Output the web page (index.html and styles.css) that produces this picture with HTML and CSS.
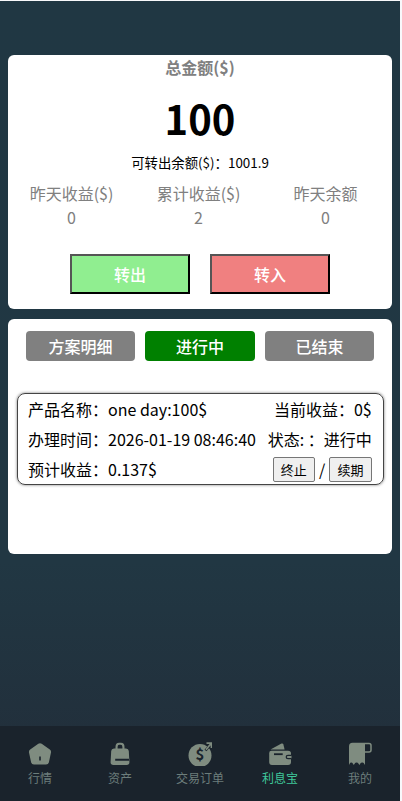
FILE: index.html
```html
<!DOCTYPE html>
<html lang="zh">
<head>
    <meta charset="UTF-8">
    <meta name="viewport" content="width=device-width, initial-scale=1.0">
    <title>利息宝</title>
    <link rel="stylesheet" href="styles.css">
</head>
<body>
    <div class="app">
        <div class="page">
            <div class="card summary">
                <div class="total-title">总金额($)</div>
                <div class="total-amount">100</div>
                <div class="available">可转出余额($)：1001.9</div>
                <div class="stats">
                    <div class="stat">
                        <div>昨天收益($)</div>
                        <div class="stat-number">0</div>
                    </div>
                    <div class="stat">
                        <div>累计收益($)</div>
                        <div class="stat-number">2</div>
                    </div>
                    <div class="stat">
                        <div>昨天余额</div>
                        <div class="stat-number">0</div>
                    </div>
                </div>
                <div class="transfer-btns">
                    <button class="transfer-btn out">转出</button>
                    <button class="transfer-btn in">转入</button>
                </div>
            </div>

            <div class="card plans">
                <div class="tabs">
                    <div class="tab">方案明细</div>
                    <div class="tab active">进行中</div>
                    <div class="tab">已结束</div>
                </div>
                <div class="order">
                    <div class="order-row">
                        <span>产品名称：one day:100$</span>
                        <span>当前收益：0$</span>
                    </div>
                    <div class="order-row">
                        <span>办理时间：2026-01-19 08:46:40</span>
                        <span>状态: ：进行中</span>
                    </div>
                    <div class="order-row">
                        <span>预计收益：0.137$</span>
                        <span class="order-actions">
                            <button class="order-btn">终止</button>
                            <span>/</span>
                            <button class="order-btn">续期</button>
                        </span>
                    </div>
                </div>
            </div>
        </div>

        <div class="tabbar">
            <div class="tabbar-item">
                <svg class="tabbar-icon" viewBox="0 0 24 24"><path fill-rule="evenodd" d="M10.3 1.8 Q12 0.6 13.7 1.8 L21.8 7.6 Q23.4 8.8 23 10.6 L20.9 20.2 Q20.4 22.6 18 22.6 H6 Q3.6 22.6 3.1 20.2 L1 10.6 Q0.6 8.8 2.2 7.6 Z M11.2 14.5 V18.5 H12.8 V14.5 Z"/></svg>
                <span>行情</span>
            </div>
            <div class="tabbar-item">
                <svg class="tabbar-icon" viewBox="0 0 24 24"><path fill-rule="evenodd" d="M7.5 6.5 V5 Q7.5 0.8 11 0.8 H13 Q16.5 0.8 16.5 5 V6.5 H18 Q20.6 6.5 20.8 9 L21.4 20 Q21.6 23 18.6 23 H5.4 Q2.4 23 2.6 20 L3.2 9 Q3.4 6.5 6 6.5 Z M9.6 6.5 H14.4 V5 Q14.4 2.8 12.8 2.8 H11.2 Q9.6 2.8 9.6 5 Z M7.2 16.8 V18.8 H21.6 V16.8 Z"/></svg>
                <span>资产</span>
            </div>
            <div class="tabbar-item">
                <svg class="tabbar-icon" viewBox="0 0 24 24"><circle cx="12" cy="13.5" r="11.5"/><path class="icon-cut" d="M17.5 8.5 L23 2"/><path class="icon-arrow" d="M18.5 1.1 H23.4 V6 M18 7.8 L23.2 1.3"/><text class="icon-dollar" x="12" y="17.5" text-anchor="middle">$</text></svg>
                <span>交易订单</span>
            </div>
            <div class="tabbar-item active-item">
                <svg class="tabbar-icon" viewBox="0 0 24 24"><path d="M2.5 7.5 L13.5 1.5 Q15 1 15.4 2.5 L16.6 7.5 Z"/><path d="M1.2 11 Q1.2 8.7 3.5 8.7 H20 Q23 8.7 23 11.5 V20 Q23 23 20 23 H4 Q1.2 23 1.2 20 Z"/><rect class="icon-cut-fill" x="6" y="11.3" width="8.7" height="1.8"/><path class="icon-notch" d="M23.5 13.4 H20 Q18.2 13.4 18.2 15 Q18.2 16.6 20 16.6 H23.5"/></svg>
                <span>利息宝</span>
            </div>
            <div class="tabbar-item">
                <svg class="tabbar-icon" viewBox="0 0 24 24"><path d="M4.5 0.8 H17 V23 Q15.8 20.6 14.2 20.6 Q12.6 20.6 11.4 23 Q10 20.6 8.6 20.6 Q7 20.6 5.8 23 Q4.4 20.6 3.2 20.6 Q2 20.6 1 23 V4.5 Q1 0.8 4.5 0.8 Z"/><path class="icon-ring" d="M17 1.5 H21 Q23 1.5 23 3.5 V8 Q23 10 21 10 H17"/></svg>
                <span>我的</span>
            </div>
        </div>
    </div>
</body>
</html>
```

FILE: styles.css
```css
*, *:before, *:after {
    margin: 0;
    padding: 0;
    box-sizing: border-box;
}

html, body {
    height: 100%;
}

body {
    font-family: "Noto Sans CJK SC", "Noto Sans", sans-serif;
    background-color: #f8f8fb;
    padding: 1px 2px 0 0;
    overflow: hidden;
}

.app {
    height: 100%;
    display: flex;
    flex-direction: column;
    background: linear-gradient(#203743, #213743 70%, #222d39);
}

.page {
    flex: 1;
    padding: 54px 8px 0;
}

.card {
    background-color: #fff;
    border-radius: 6px;
}

/* Summary card */
.summary {
    height: 254px;
    text-align: center;
}

.total-title {
    font-size: 16px;
    font-weight: bold;
    line-height: 25px;
    color: #808080;
}

.total-amount {
    margin-top: 10px;
    font-size: 40px;
    font-weight: bold;
    line-height: 56px;
    color: #000;
}

.available {
    margin-top: 6px;
    font-size: 13.4px;
    line-height: 20px;
    color: #000;
}

.stats {
    display: flex;
    margin-top: 9px;
    padding-right: 3px;
}

.stat {
    flex: 1;
    font-size: 16px;
    line-height: 24px;
    color: #808080;
}

.transfer-btns {
    display: flex;
    justify-content: center;
    gap: 20px;
    margin-top: 25px;
}

.transfer-btn {
    width: 120px;
    height: 40px;
    font-family: inherit;
    font-size: 16px;
    font-weight: 500;
    color: #fff;
    border: 2px solid;
    border-color: #555 #000 #000 #555;
}

.transfer-btn.out {
    background-color: #90ee90;
}

.transfer-btn.in {
    background-color: #f08080;
}

/* Plans card */
.plans {
    height: 235px;
    margin-top: 10px;
    padding: 12px 8px 0 9px;
}

.tabs {
    display: flex;
    justify-content: center;
    gap: 10px;
    margin-right: 1px;
}

.tab {
    width: 109px;
    height: 30px;
    border-radius: 4px;
    background-color: #808080;
    color: #fff;
    font-size: 16px;
    font-weight: 500;
    line-height: 30px;
    text-align: center;
}

.tab.active {
    width: 110px;
    background-color: #008000;
}

.order {
    margin-top: 32px;
    padding: 0 11.3px 0 10px;
    border: 1px solid #444;
    border-radius: 8px;
    box-shadow: 0 0 3px #777;
    font-size: 16px;
    color: #000;
}

.order-row {
    display: flex;
    justify-content: space-between;
    align-items: center;
    height: 30px;
}

.order-actions {
    display: flex;
    align-items: center;
    gap: 4px;
}

.order-btn {
    width: 42.4px;
    height: 25px;
    font-family: inherit;
    font-size: 13px;
    color: #000;
    background-color: #efefef;
    border: 1px solid #767676;
    border-radius: 2px;
}

/* Bottom bar */
.tabbar {
    display: flex;
    height: 75px;
    padding-top: 16px;
    background-color: #1a232c;
}

.tabbar-item {
    flex: 1;
    display: flex;
    flex-direction: column;
    align-items: center;
    gap: 4px;
    font-size: 12px;
    line-height: 16px;
    color: #6c7d7b;
}

.tabbar-item.active-item {
    color: #3fc79a;
}

.tabbar-icon {
    width: 24px;
    height: 24px;
    fill: #7f8c80;
}

/* Parts of the icons drawn in the bar colour */
.icon-dollar {
    font-size: 15px;
    font-weight: bold;
    fill: #1a232c;
}

.icon-cut {
    fill: none;
    stroke: #1a232c;
    stroke-width: 2.6;
}

.icon-cut-fill {
    fill: #1a232c;
}

.icon-arrow {
    fill: none;
    stroke: #7f8c80;
    stroke-width: 1.6;
}

.icon-notch {
    fill: #7f8c80;
    stroke: #1a232c;
    stroke-width: 1.2;
}

.icon-ring {
    fill: #1a232c;
    stroke: #7f8c80;
    stroke-width: 1.5;
}
```
